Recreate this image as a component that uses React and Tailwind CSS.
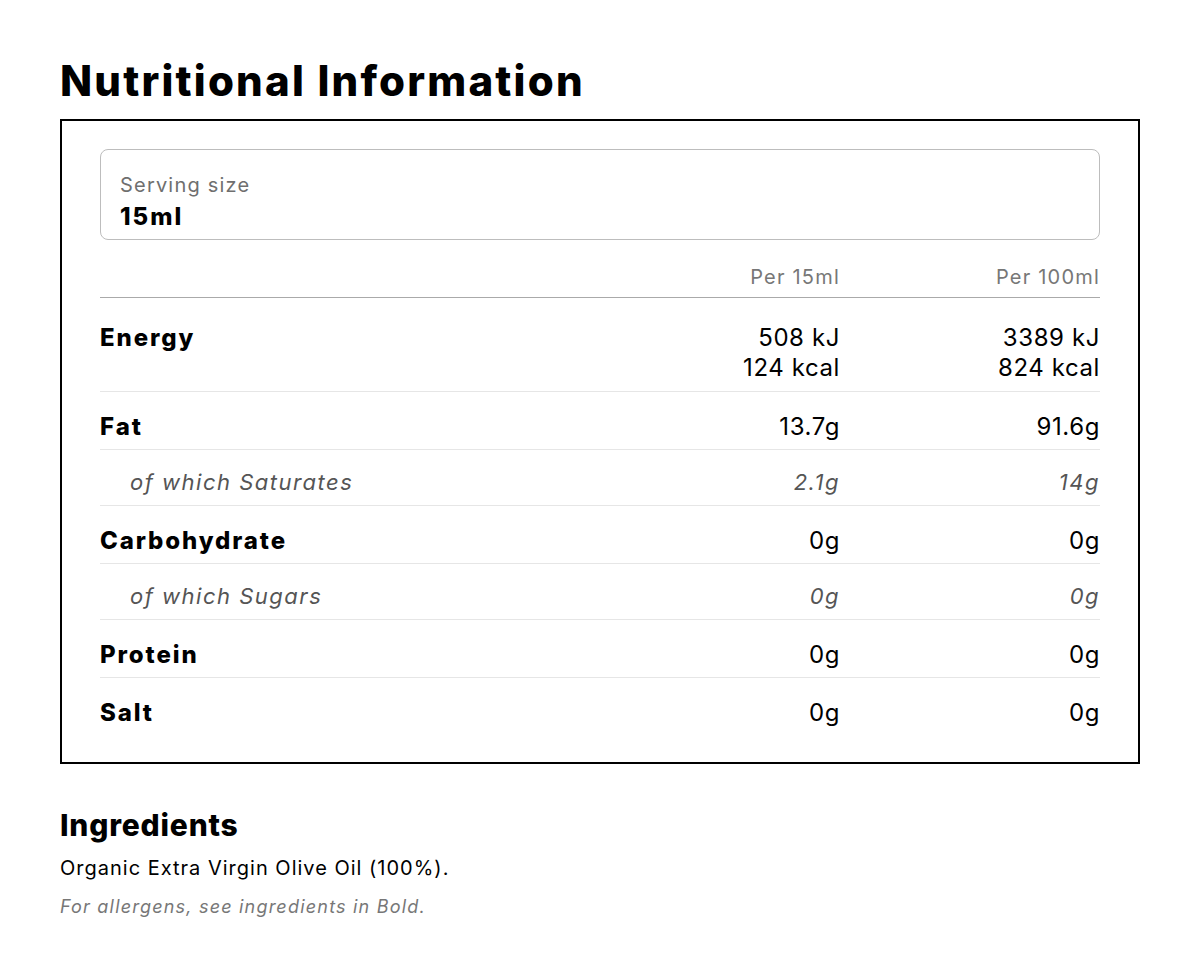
const ROWS = [
  { label: "Fat", a: "13.7g", b: "91.6g" },
  { label: "of which Saturates", a: "2.1g", b: "14g", sub: true },
  { label: "Carbohydrate", a: "0g", b: "0g" },
  { label: "of which Sugars", a: "0g", b: "0g", sub: true },
  { label: "Protein", a: "0g", b: "0g" },
  { label: "Salt", a: "0g", b: "0g", last: true },
];

function Row({ row }) {
  if (row.sub) {
    return (
      <div className="grid grid-cols-[1fr_260px_260px] pt-[18px] pb-[9px] border-b border-[#e6e6e6] text-[22px] leading-[28px] italic text-[#555] tracking-[1.5px]">
        <span className="pl-[30px]">{row.label}</span>
        <span className="text-right">{row.a}</span>
        <span className="text-right">{row.b}</span>
      </div>
    );
  }
  return (
    <div
      className={`grid grid-cols-[1fr_260px_260px] pt-[20px] pb-[7px] text-[24px] leading-[30px] text-black tracking-[0.6px] ${
        row.last ? "" : "border-b border-[#e6e6e6]"
      }`}
    >
      <span className="font-extrabold tracking-[1.9px]">{row.label}</span>
      <span className="text-right">{row.a}</span>
      <span className="text-right">{row.b}</span>
    </div>
  );
}

export default function App() {
  return (
    <div className="min-h-screen bg-white px-[60px] pt-[52px] font-['Inter',sans-serif] text-black">
      <h1 className="text-[42px] leading-[58px] font-extrabold tracking-[2.2px]">Nutritional Information</h1>

      <div className="mt-[9px] w-[1080px] border-2 border-black px-[38px] pt-[28px] pb-[27px]">
        {/* Serving size */}
        <div className="rounded-lg border border-[#bdbdbd] px-[19px] pt-[20px] pb-[5px]">
          <p className="text-[20px] leading-[30px] text-[#6f6f6f] tracking-[1.2px]">Serving size</p>
          <p className="text-[24px] leading-[34px] font-extrabold tracking-[2px]">15ml</p>
        </div>

        {/* Header */}
        <div className="mt-[22px] grid grid-cols-[1fr_260px_260px] pb-[5px] border-b border-[#aaaaaa] text-[20px] leading-[30px] text-[#777] tracking-[1.2px]">
          <span />
          <span className="text-right">Per 15ml</span>
          <span className="text-right">Per 100ml</span>
        </div>

        {/* Energy */}
        <div className="grid grid-cols-[1fr_260px_260px] pt-[25px] pb-[8px] border-b border-[#e6e6e6] text-[24px] leading-[30px] tracking-[0.6px]">
          <span className="font-extrabold tracking-[1.9px]">Energy</span>
          <span className="text-right">
            508 kJ
            <br />
            124 kcal
          </span>
          <span className="text-right">
            3389 kJ
            <br />
            824 kcal
          </span>
        </div>

        {ROWS.map((row) => (
          <Row key={row.label} row={row} />
        ))}
      </div>

      <div className="mt-[42px]">
        <h2 className="text-[30px] leading-[38px] font-extrabold tracking-[0.8px]">Ingredients</h2>
        <p className="mt-[9px] text-[20px] leading-[30px] tracking-[1px]">Organic Extra Virgin Olive Oil (100%).</p>
        <p className="mt-[10px] text-[18px] leading-[28px] italic text-[#777] tracking-[1.2px]">For allergens, see ingredients in Bold.</p>
      </div>
    </div>
  );
}
